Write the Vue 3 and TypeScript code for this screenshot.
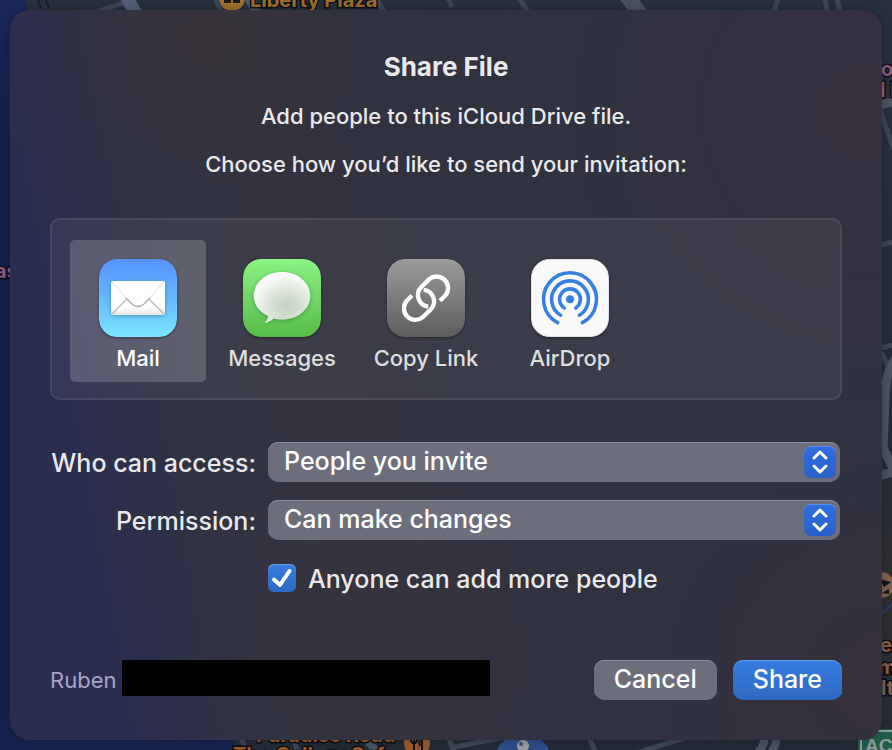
<script setup lang="ts">
import { ref } from 'vue'

type Method = 'mail' | 'messages' | 'link' | 'airdrop'

const methods: { id: Method; label: string }[] = [
  { id: 'mail', label: 'Mail' },
  { id: 'messages', label: 'Messages' },
  { id: 'link', label: 'Copy Link' },
  { id: 'airdrop', label: 'AirDrop' },
]

const selected = ref<Method>('mail')
const access = ref('People you invite')
const permission = ref('Can make changes')
const anyoneCanAdd = ref(true)
</script>

<template>
  <main class="desktop">
    <!-- Map behind the sheet -->
    <svg class="map" viewBox="0 0 892 750" preserveAspectRatio="xMidYMid slice" aria-hidden="true">
      <defs>
        <linearGradient id="water" x1="0" y1="0" x2="0" y2="1">
          <stop offset="0" stop-color="#19275a" />
          <stop offset="0.2" stop-color="#15214b" />
          <stop offset="1" stop-color="#17234f" />
        </linearGradient>
        <linearGradient id="land" x1="0" y1="0" x2="0" y2="1">
          <stop offset="0" stop-color="#27313c" />
          <stop offset="0.6" stop-color="#232b38" />
          <stop offset="0.75" stop-color="#2e2e32" />
          <stop offset="0.9" stop-color="#2b2e34" />
          <stop offset="1" stop-color="#222a35" />
        </linearGradient>
      </defs>
      <rect width="892" height="750" fill="url(#land)" />
      <path d="M0 0H25L28 10L120 400L232 738L238 750H0Z" fill="url(#water)" />
      <g fill="none" stroke="#3d4754" stroke-width="5">
        <path d="M96 12L126 2M215 -2L221 12M376 -2L384 12M448 -2L452 7M519 -2L528 12M778 -2L774 12M825 -2L827 12M837 -2L840 12" />
        <path d="M880 245L894 242M880 348L894 345M881 352L888 366M880 110L894 150M450 748L500 738M589 738L596 752M640 752L684 738" />
        <path d="M241 738L247 752M293 738L298 752M448 736L454 752" />
      </g>
      <g fill="none" stroke="#4a5361">
        <path d="M126 -4L136 14" stroke="#556078" stroke-width="13" />
        <path d="M249 -2L256 12" stroke="#525c6c" stroke-width="9" />
        <path d="M625 -6L642 16" stroke-width="15" />
        <path d="M896 358Q885 372 885 400L883 448L896 474M880 475L896 472M880 105L896 101" stroke-width="9" />
        <path d="M757 752Q765 746 764 738M771 752Q777 745 776 738M366 738L376 752" stroke-width="8" />
      </g>
      <path d="M38 0L41 8M46 0L49 8" stroke="#171d26" stroke-width="2" />
      <path d="M880 616L894 602" stroke="#263c59" stroke-width="3" />
      <g class="place gold">
        <circle cx="232" cy="-2" r="13" />
        <path d="M224 -4H231V3H224ZM233 -4H240V3H233Z" fill="#17191d" />
        <text x="250" y="7">Liberty Plaza</text>
      </g>
      <g class="place pink">
        <text x="-5" y="278">as</text>
        <text x="881" y="76">o</text>
        <text x="880" y="97">l I</text>
      </g>
      <g class="place orange">
        <text x="256" y="742">Paradise Road</text>
        <text x="233" y="762">The Gallery Cafe</text>
        <circle cx="417" cy="743" r="13" />
        <path d="M411 736V741Q414 746 417 741V736M414 736V752M422 752V736Q418 740 420 746" fill="none" stroke="#111419" stroke-width="2" />
      </g>
      <g class="place brown">
        <circle cx="881" cy="585" r="13" />
        <path d="M879 579L891 582L884 587ZM882 593L889 589V594Z" fill="#101216" />
        <text x="880" y="652">er</text>
        <text x="878" y="674">m</text>
        <text x="881" y="695">lt</text>
      </g>
      <circle cx="523" cy="764" r="30" fill="#2e4d8a" />
      <circle cx="523" cy="746" r="6" fill="#9c9da0" />
      <circle cx="521" cy="744" r="2" fill="#2e4d8a" />
      <rect x="858" y="729" width="40" height="30" rx="3" fill="#215e4c" />
      <path d="M861 752V734Q861 731 864 731H892" fill="none" stroke="#8d9d9a" stroke-width="2" />
      <text class="sign" x="865" y="752">ACC</text>
    </svg>

    <form class="sheet" aria-labelledby="share-title" @submit.prevent>
      <header class="intro">
        <h1 id="share-title">Share File</h1>
        <p>Add people to this iCloud Drive file.</p>
        <p>Choose how you’d like to send your invitation:</p>
      </header>

      <div class="methods">
        <button
          v-for="m in methods"
          :key="m.id"
          type="button"
          class="method"
          :class="{ selected: selected === m.id }"
          :aria-pressed="selected === m.id"
          @click="selected = m.id"
        >
          <svg v-if="m.id === 'mail'" class="icon" viewBox="0 0 78 78" aria-hidden="true">
            <defs>
              <linearGradient id="mail-bg" x1="0" y1="0" x2="0" y2="1">
                <stop offset="0" stop-color="#5593ff" />
                <stop offset="0.5" stop-color="#65b9fe" />
                <stop offset="1" stop-color="#7ce6ff" />
              </linearGradient>
              <linearGradient id="paper" x1="0" y1="0" x2="0" y2="1">
                <stop offset="0.75" stop-color="#ffffff" />
                <stop offset="1" stop-color="#e6e6e6" />
              </linearGradient>
            </defs>
            <rect width="78" height="78" rx="18" fill="url(#mail-bg)" />
            <rect class="lift" x="12" y="22" width="54" height="34" rx="2" fill="url(#paper)" />
            <path d="M13 55L28 40M65 55L50 40" stroke="#b9b9b9" stroke-width="1.3" />
            <path d="M13 23L28 40M65 23L50 40" stroke="#dcdcdc" />
            <path d="M27 39L33 45Q39 50 45 45L51 39" fill="none" stroke="#aeaeae" stroke-width="1.4" />
          </svg>

          <svg v-else-if="m.id === 'messages'" class="icon" viewBox="0 0 78 78" aria-hidden="true">
            <defs>
              <linearGradient id="msg-bg" x1="0" y1="0" x2="0" y2="1">
                <stop offset="0" stop-color="#8bf383" />
                <stop offset="1" stop-color="#57bc48" />
              </linearGradient>
              <radialGradient id="bubble" cx="0.58" cy="0.68" r="0.72">
                <stop offset="0" stop-color="#c2d2be" />
                <stop offset="0.4" stop-color="#d8e2d6" />
                <stop offset="0.75" stop-color="#f2f6f1" />
                <stop offset="1" stop-color="#ffffff" />
              </radialGradient>
            </defs>
            <rect width="78" height="78" rx="18" fill="url(#msg-bg)" />
            <path
              class="lift"
              d="M39 13C55 13 67.300 23.500 67.300 37C67.300 50 55 60.500 39 60.500C36 60.500 33 60.200 30.500 59.500C28 62 25 63.800 21.500 64C24 61.500 25 59.500 25 57C16.500 53 10.700 46 10.700 37C10.700 23.500 23 13 39 13Z"
              fill="url(#bubble)"
            />
          </svg>

          <svg v-else-if="m.id === 'link'" class="icon" viewBox="0 0 78 78" aria-hidden="true">
            <defs>
              <linearGradient id="link-bg" x1="0" y1="0" x2="0" y2="1">
                <stop offset="0" stop-color="#9b9b9b" />
                <stop offset="1" stop-color="#5d5d5d" />
              </linearGradient>
            </defs>
            <rect width="78" height="78" rx="18" fill="url(#link-bg)" />
            <g fill="none" stroke="#fff" stroke-width="4.300">
              <path d="M53 41.800L58.400 36.400A11.500 11.500 0 0 0 42.200 20.200L34.400 28A11.500 11.500 0 0 0 41.300 47.600" />
              <path d="M53 41.800L58.400 36.400A11.500 11.500 0 0 0 42.200 20.200L34.400 28A11.500 11.500 0 0 0 41.300 47.600" transform="rotate(180 39 39.200)" />
            </g>
          </svg>

          <svg v-else class="icon" viewBox="0 0 78 78" aria-hidden="true">
            <rect x="0.500" y="0.500" width="77" height="77" rx="18" fill="#fafafa" stroke="#e2e2e4" />
            <g fill="none" stroke="#377fe0" stroke-width="3.600" stroke-linecap="round">
              <path d="M33.200 48.900A10.400 10.400 0 1 1 44.800 48.900" />
              <path d="M29.700 56.200A18.400 18.400 0 1 1 48.300 56.200" />
              <path d="M26.600 63.700A26.500 26.500 0 1 1 51.400 63.700" />
            </g>
            <circle cx="39" cy="40.300" r="4" fill="#377fe0" />
          </svg>
          <span>{{ m.label }}</span>
        </button>
      </div>

      <div class="fields">
        <label for="access">Who can access:</label>
        <div class="popup">
          <select id="access" v-model="access">
            <option>People you invite</option>
            <option>Anyone with the link</option>
          </select>
          <svg class="stepper" viewBox="0 0 32 32" aria-hidden="true">
            <path d="M10 12L16 6L22 12M10 20L16 26L22 20" />
          </svg>
        </div>

        <label for="permission">Permission:</label>
        <div class="popup">
          <select id="permission" v-model="permission">
            <option>Can make changes</option>
            <option>View only</option>
          </select>
          <svg class="stepper" viewBox="0 0 32 32" aria-hidden="true">
            <path d="M10 12L16 6L22 12M10 20L16 26L22 20" />
          </svg>
        </div>

        <label class="check" for="anyone">
          <span class="tick">
            <input id="anyone" v-model="anyoneCanAdd" type="checkbox" />
            <svg v-if="anyoneCanAdd" viewBox="0 0 28 28" aria-hidden="true">
              <path d="M6 15.500L12 21L21.500 7" />
            </svg>
          </span>
          <span class="check-text">Anyone can add more people</span>
        </label>
      </div>

      <footer class="footer">
        <span class="owner">Ruben</span>
        <span class="redacted"></span>
        <div class="actions">
          <button type="button" class="push">Cancel</button>
          <button type="submit" class="push primary">Share</button>
        </div>
      </footer>
    </form>
  </main>
</template>

<style>
body {
  background: #232b38;
}
</style>

<style scoped>
.desktop {
  position: relative;
  box-sizing: border-box;
  min-height: 100vh;
  padding: 10px;
  overflow: hidden;
  font-family: Inter, 'Liberation Sans', sans-serif;
  font-weight: 500;
  color: #e9e9ec;
}

.map {
  position: absolute;
  inset: 0;
  width: 100%;
  height: 100%;
}

.place text {
  font-size: 20px;
  font-weight: 700;
  stroke: #0d0f16;
  stroke-width: 3px;
  paint-order: stroke;
}

.gold { fill: #a0702b; }
.pink { fill: #8e5b85; }
.orange { fill: #99592d; }
.brown { fill: #84614d; }

.sign {
  font: 700 19px 'Liberation Sans', sans-serif;
  fill: #8d9d9a;
}

.sheet {
  position: relative;
  box-sizing: border-box;
  padding: 40px;
  border-radius: 20px;
  background:
    radial-gradient(circle at 22% 4%, rgba(58, 50, 56, 0.7), rgba(58, 50, 56, 0) 16%),
    radial-gradient(circle at 98% 14%, rgba(56, 47, 62, 0.8), rgba(56, 47, 62, 0) 28%),
    radial-gradient(circle at 100% 92%, rgba(56, 48, 56, 0.8), rgba(56, 48, 56, 0) 20%),
    radial-gradient(circle at 42% 84%, rgba(54, 51, 60, 0.9), rgba(54, 51, 60, 0) 24%),
    linear-gradient(79deg, #2b2d50 0%, #2b2d4f 11%, #313342 26%, #33333e 36%, #303240 55%, #303240 100%);
  box-shadow: 0 0 12px rgba(0, 0, 0, 0.25);
}

.intro {
  display: grid;
  gap: 16px;
  text-align: center;
  font-size: 22px;
  line-height: 32px;
}

.intro h1,
.intro p {
  margin: 0;
}

.intro h1 {
  font-size: 26px;
  line-height: 34px;
  font-weight: 700;
}

.methods {
  display: flex;
  gap: 8px;
  margin-top: 38px;
  padding: 20px 18px 16px;
  border: 2px solid rgba(255, 255, 255, 0.08);
  border-radius: 10px;
  background: rgba(255, 255, 255, 0.05);
}

.method {
  box-sizing: border-box;
  display: flex;
  flex-direction: column;
  align-items: center;
  gap: 6px;
  width: 136px;
  height: 142px;
  padding: 19px 0 0;
  border: 0;
  border-radius: 5px;
  background: none;
  color: #dedee0;
  font: 500 22px/30px Inter, 'Liberation Sans', sans-serif;
  white-space: nowrap;
}

.method.selected {
  background: rgba(255, 255, 255, 0.18);
  color: #fff;
}

.icon {
  flex: none;
  width: 78px;
  height: 78px;
  border-radius: 18px;
  box-shadow: 0 1px 3px rgba(0, 0, 0, 0.4);
}

.lift {
  filter: drop-shadow(0 1px 2px rgba(0, 60, 60, 0.35));
}

.fields {
  display: grid;
  grid-template-columns: 206px 1fr;
  column-gap: 12px;
  row-gap: 18px;
  margin-top: 42px;
  padding-right: 2px;
  font-size: 25px;
  line-height: 38px;
}

.fields > label {
  padding-top: 2px;
  text-align: right;
  white-space: nowrap;
}

.popup {
  position: relative;
}

select {
  display: block;
  box-sizing: border-box;
  width: 100%;
  height: 40px;
  padding: 0 44px 2px 16px;
  border: 0;
  border-radius: 10px;
  appearance: none;
  background: #6d6e7b;
  box-shadow: inset 0 1px 0 #8f909b;
  color: #fff;
  font: 500 25px/38px Inter, 'Liberation Sans', sans-serif;
}

option {
  background: #33343f;
}

.stepper {
  position: absolute;
  top: 4px;
  right: 4px;
  width: 32px;
  height: 32px;
  border-radius: 7px;
  background: linear-gradient(#2f6ee0, #2860c8);
  box-shadow: inset 0 1px 0 #5c8fe8;
  pointer-events: none;
}

.stepper path,
.tick path {
  fill: none;
  stroke: #fff;
  stroke-width: 3;
  stroke-linecap: round;
  stroke-linejoin: round;
}

.tick path {
  stroke-width: 4;
}

.fields > .check {
  grid-column: 2;
  display: flex;
  align-items: center;
  gap: 12px;
  padding: 0;
}

.check-text {
  padding-top: 2px;
}

.tick {
  position: relative;
  flex: none;
  width: 28px;
  height: 28px;
}

.tick input {
  display: block;
  width: 28px;
  height: 28px;
  margin: 0;
  border-radius: 6px;
  appearance: none;
  background: #6d6e7b;
}

.tick input:checked {
  background: linear-gradient(#377de0, #2d69c2);
  box-shadow: inset 0 1px 0 #639be9;
}

.tick svg {
  position: absolute;
  inset: 0;
  pointer-events: none;
}

.footer {
  display: flex;
  align-items: flex-start;
  margin-top: 62px;
}

.owner {
  flex: none;
  width: 72px;
  color: #a6a5c8;
  font-size: 22px;
  font-weight: 400;
  line-height: 40px;
}

.redacted {
  flex: 0 1 368px;
  height: 36px;
  background: #000;
}

.actions {
  display: flex;
  gap: 16px;
  margin-left: auto;
}

.push {
  height: 40px;
  padding: 0 20px 2px;
  border: 0;
  border-radius: 10px;
  background: #6d6e7b;
  box-shadow: inset 0 1px 0 #8f909b;
  color: #fff;
  font: 500 25px/38px Inter, 'Liberation Sans', sans-serif;
}

.push.primary {
  background: linear-gradient(#377de0, #2d69c2);
  box-shadow: inset 0 1px 0 #639be9;
}
</style>
